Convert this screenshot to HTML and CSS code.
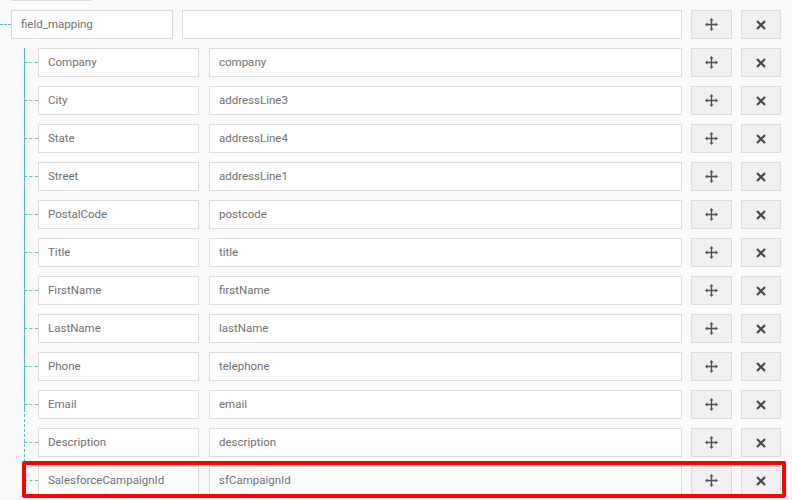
FILE: index.html
```html
<!DOCTYPE html>
<html>
<head>
<meta charset="utf-8">
<link rel="stylesheet" href="styles.css">
</head>
<body>
<div class="page">
  <div class="stub"></div>
  <div class="row parent">
    <span class="conn conn-root"></span>
    <div class="field key key-root">field_mapping</div>
    <div class="field val val-root"></div>
    <button class="btn move"><svg width="13" height="13" viewBox="0 0 13 13"><path d="M6.5 1.5v10M1.5 6.5h10" stroke="#505050" stroke-width="1.4" fill="none"/><path d="M6.5 0L4.5 2.4h4zM6.5 13L4.5 10.6h4zM0 6.5L2.4 4.5v4zM13 6.5L10.6 4.5v4z" fill="#505050"/></svg></button>
    <button class="btn del"><svg width="10" height="10" viewBox="0 0 10 10"><path d="M1 1L9 9M9 1L1 9" stroke="#454545" stroke-width="2.1" fill="none"/></svg></button>
  </div>
  <div class="children">
    <div class="row child"><span class="conn"></span><div class="field key">Company</div><div class="field val">company</div><button class="btn move"><svg width="13" height="13" viewBox="0 0 13 13"><path d="M6.5 1.5v10M1.5 6.5h10" stroke="#505050" stroke-width="1.4" fill="none"/><path d="M6.5 0L4.5 2.4h4zM6.5 13L4.5 10.6h4zM0 6.5L2.4 4.5v4zM13 6.5L10.6 4.5v4z" fill="#505050"/></svg></button><button class="btn del"><svg width="10" height="10" viewBox="0 0 10 10"><path d="M1 1L9 9M9 1L1 9" stroke="#454545" stroke-width="2.1" fill="none"/></svg></button></div>
    <div class="row child"><span class="conn"></span><div class="field key">City</div><div class="field val">addressLine3</div><button class="btn move"><svg width="13" height="13" viewBox="0 0 13 13"><path d="M6.5 1.5v10M1.5 6.5h10" stroke="#505050" stroke-width="1.4" fill="none"/><path d="M6.5 0L4.5 2.4h4zM6.5 13L4.5 10.6h4zM0 6.5L2.4 4.5v4zM13 6.5L10.6 4.5v4z" fill="#505050"/></svg></button><button class="btn del"><svg width="10" height="10" viewBox="0 0 10 10"><path d="M1 1L9 9M9 1L1 9" stroke="#454545" stroke-width="2.1" fill="none"/></svg></button></div>
    <div class="row child"><span class="conn"></span><div class="field key">State</div><div class="field val">addressLine4</div><button class="btn move"><svg width="13" height="13" viewBox="0 0 13 13"><path d="M6.5 1.5v10M1.5 6.5h10" stroke="#505050" stroke-width="1.4" fill="none"/><path d="M6.5 0L4.5 2.4h4zM6.5 13L4.5 10.6h4zM0 6.5L2.4 4.5v4zM13 6.5L10.6 4.5v4z" fill="#505050"/></svg></button><button class="btn del"><svg width="10" height="10" viewBox="0 0 10 10"><path d="M1 1L9 9M9 1L1 9" stroke="#454545" stroke-width="2.1" fill="none"/></svg></button></div>
    <div class="row child"><span class="conn"></span><div class="field key">Street</div><div class="field val">addressLine1</div><button class="btn move"><svg width="13" height="13" viewBox="0 0 13 13"><path d="M6.5 1.5v10M1.5 6.5h10" stroke="#505050" stroke-width="1.4" fill="none"/><path d="M6.5 0L4.5 2.4h4zM6.5 13L4.5 10.6h4zM0 6.5L2.4 4.5v4zM13 6.5L10.6 4.5v4z" fill="#505050"/></svg></button><button class="btn del"><svg width="10" height="10" viewBox="0 0 10 10"><path d="M1 1L9 9M9 1L1 9" stroke="#454545" stroke-width="2.1" fill="none"/></svg></button></div>
    <div class="row child"><span class="conn"></span><div class="field key">PostalCode</div><div class="field val">postcode</div><button class="btn move"><svg width="13" height="13" viewBox="0 0 13 13"><path d="M6.5 1.5v10M1.5 6.5h10" stroke="#505050" stroke-width="1.4" fill="none"/><path d="M6.5 0L4.5 2.4h4zM6.5 13L4.5 10.6h4zM0 6.5L2.4 4.5v4zM13 6.5L10.6 4.5v4z" fill="#505050"/></svg></button><button class="btn del"><svg width="10" height="10" viewBox="0 0 10 10"><path d="M1 1L9 9M9 1L1 9" stroke="#454545" stroke-width="2.1" fill="none"/></svg></button></div>
    <div class="row child"><span class="conn"></span><div class="field key">Title</div><div class="field val">title</div><button class="btn move"><svg width="13" height="13" viewBox="0 0 13 13"><path d="M6.5 1.5v10M1.5 6.5h10" stroke="#505050" stroke-width="1.4" fill="none"/><path d="M6.5 0L4.5 2.4h4zM6.5 13L4.5 10.6h4zM0 6.5L2.4 4.5v4zM13 6.5L10.6 4.5v4z" fill="#505050"/></svg></button><button class="btn del"><svg width="10" height="10" viewBox="0 0 10 10"><path d="M1 1L9 9M9 1L1 9" stroke="#454545" stroke-width="2.1" fill="none"/></svg></button></div>
    <div class="row child"><span class="conn"></span><div class="field key">FirstName</div><div class="field val">firstName</div><button class="btn move"><svg width="13" height="13" viewBox="0 0 13 13"><path d="M6.5 1.5v10M1.5 6.5h10" stroke="#505050" stroke-width="1.4" fill="none"/><path d="M6.5 0L4.5 2.4h4zM6.5 13L4.5 10.6h4zM0 6.5L2.4 4.5v4zM13 6.5L10.6 4.5v4z" fill="#505050"/></svg></button><button class="btn del"><svg width="10" height="10" viewBox="0 0 10 10"><path d="M1 1L9 9M9 1L1 9" stroke="#454545" stroke-width="2.1" fill="none"/></svg></button></div>
    <div class="row child"><span class="conn"></span><div class="field key">LastName</div><div class="field val">lastName</div><button class="btn move"><svg width="13" height="13" viewBox="0 0 13 13"><path d="M6.5 1.5v10M1.5 6.5h10" stroke="#505050" stroke-width="1.4" fill="none"/><path d="M6.5 0L4.5 2.4h4zM6.5 13L4.5 10.6h4zM0 6.5L2.4 4.5v4zM13 6.5L10.6 4.5v4z" fill="#505050"/></svg></button><button class="btn del"><svg width="10" height="10" viewBox="0 0 10 10"><path d="M1 1L9 9M9 1L1 9" stroke="#454545" stroke-width="2.1" fill="none"/></svg></button></div>
    <div class="row child"><span class="conn"></span><div class="field key">Phone</div><div class="field val">telephone</div><button class="btn move"><svg width="13" height="13" viewBox="0 0 13 13"><path d="M6.5 1.5v10M1.5 6.5h10" stroke="#505050" stroke-width="1.4" fill="none"/><path d="M6.5 0L4.5 2.4h4zM6.5 13L4.5 10.6h4zM0 6.5L2.4 4.5v4zM13 6.5L10.6 4.5v4z" fill="#505050"/></svg></button><button class="btn del"><svg width="10" height="10" viewBox="0 0 10 10"><path d="M1 1L9 9M9 1L1 9" stroke="#454545" stroke-width="2.1" fill="none"/></svg></button></div>
    <div class="row child"><span class="conn"></span><div class="field key">Email</div><div class="field val">email</div><button class="btn move"><svg width="13" height="13" viewBox="0 0 13 13"><path d="M6.5 1.5v10M1.5 6.5h10" stroke="#505050" stroke-width="1.4" fill="none"/><path d="M6.5 0L4.5 2.4h4zM6.5 13L4.5 10.6h4zM0 6.5L2.4 4.5v4zM13 6.5L10.6 4.5v4z" fill="#505050"/></svg></button><button class="btn del"><svg width="10" height="10" viewBox="0 0 10 10"><path d="M1 1L9 9M9 1L1 9" stroke="#454545" stroke-width="2.1" fill="none"/></svg></button></div>
    <div class="row child"><span class="conn"></span><div class="field key">Description</div><div class="field val">description</div><button class="btn move"><svg width="13" height="13" viewBox="0 0 13 13"><path d="M6.5 1.5v10M1.5 6.5h10" stroke="#505050" stroke-width="1.4" fill="none"/><path d="M6.5 0L4.5 2.4h4zM6.5 13L4.5 10.6h4zM0 6.5L2.4 4.5v4zM13 6.5L10.6 4.5v4z" fill="#505050"/></svg></button><button class="btn del"><svg width="10" height="10" viewBox="0 0 10 10"><path d="M1 1L9 9M9 1L1 9" stroke="#454545" stroke-width="2.1" fill="none"/></svg></button></div>
    <div class="row child last"><span class="conn"></span><div class="field key">SalesforceCampaignId</div><div class="field val">sfCampaignId</div><button class="btn move"><svg width="13" height="13" viewBox="0 0 13 13"><path d="M6.5 1.5v10M1.5 6.5h10" stroke="#505050" stroke-width="1.4" fill="none"/><path d="M6.5 0L4.5 2.4h4zM6.5 13L4.5 10.6h4zM0 6.5L2.4 4.5v4zM13 6.5L10.6 4.5v4z" fill="#505050"/></svg></button><button class="btn del"><svg width="10" height="10" viewBox="0 0 10 10"><path d="M1 1L9 9M9 1L1 9" stroke="#454545" stroke-width="2.1" fill="none"/></svg></button></div>
  </div>
  <div class="highlight"></div>
</div>
</body>
</html>
```
FILE: styles.css
```css
* { box-sizing: border-box; }
html, body { margin: 0; padding: 0; }
body {
  background: #fafafa;
  font-family: Roboto, "Liberation Sans", sans-serif;
  font-size: 11.5px;
  font-weight: 400;
  color: #707070;
  width: 792px;
  height: 500px;
  overflow: hidden;
}
.page { position: relative; padding-top: 0; }
.stub {
  margin-left: 11px;
  width: 80px;
  height: 1px;
  background: #dcdcdc;
}
.row {
  display: flex;
  align-items: center;
  height: 29px;
}
.parent { margin-top: 9px; }
.conn {
  flex: none;
  height: 0;
  border-top: 1px dashed #5bbcbc;
}
.conn-root { width: 11px; }
.child .conn { width: 14px; }
.field {
  height: 29px;
  border: 1px solid #dcdcdc;
  background: #fff;
  padding-left: 9px;
  padding-bottom: 1px;
  display: flex;
  align-items: center;
  white-space: nowrap;
}
.key-root { width: 162px; }
.val-root { width: 500px; margin-left: 9px; }
.child .key { width: 161px; }
.child .val { width: 473px; margin-left: 10px; }
.btn {
  flex: none;
  height: 29px;
  border: 1px solid #dcdcdc;
  background: #f0f0f0;
  padding: 0;
  display: flex;
  align-items: center;
  justify-content: center;
}
.move { width: 41px; margin-left: 9px; }
.del { width: 40px; margin-left: 9px; }
.children {
  position: relative;
  margin-left: 24px;
}
.children::before {
  content: "";
  position: absolute;
  left: 0;
  top: 0;
  height: 361px;
  border-left: 1px solid #5bbcbc;
}
.children::after {
  content: "";
  position: absolute;
  left: 0;
  top: 361px;
  height: 58px;
  border-left: 1px dashed #5bbcbc;
}
.child { margin-top: 9px; }
.highlight {
  position: absolute;
  left: 22px;
  top: 461px;
  width: 764px;
  height: 37px;
  border: 4px solid #ff0000;
  border-radius: 2px;
}
```
